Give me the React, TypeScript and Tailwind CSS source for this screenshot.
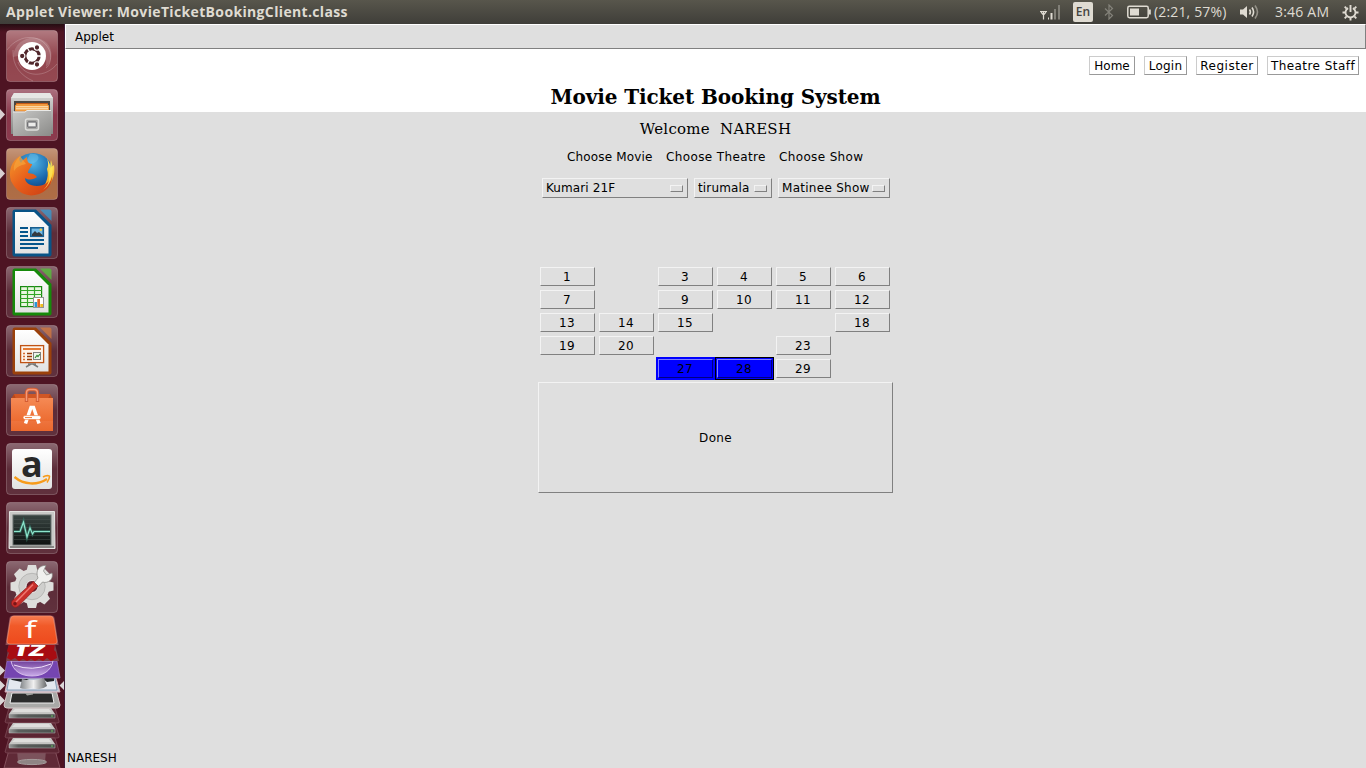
import React from "react";

const SANS = "font-['DejaVu_Sans',sans-serif]";

function Tile({ tint, arrow, children }: { tint: string; arrow?: boolean; children: React.ReactNode }) {
  return (
    <div className="flex h-[59px] w-full items-start">
      <svg width="6" height="52" viewBox="0 0 6 52" className="shrink-0">
        {arrow && <path d="M0 20 L5 25.5 L0 31Z" fill="#d8cfd1" />}
      </svg>
      <svg width="52" height="52" viewBox="0 0 52 52" className="shrink-0 overflow-visible">
        <defs>
          <linearGradient id="gloss" x1="0" y1="0" x2="0" y2="1">
            <stop offset="0" stopColor="#fff" stopOpacity=".36" />
            <stop offset=".5" stopColor="#fff" stopOpacity=".1" />
            <stop offset="1" stopColor="#fff" stopOpacity=".12" />
          </linearGradient>
          <linearGradient id="paper" x1="0" y1="0" x2="0" y2="1">
            <stop offset="0" stopColor="#fff" />
            <stop offset="1" stopColor="#e2e2e2" />
          </linearGradient>
          <linearGradient id="steel" x1="0" y1="0" x2="0" y2="1">
            <stop offset="0" stopColor="#d8d8d6" />
            <stop offset="1" stopColor="#858583" />
          </linearGradient>
          <linearGradient id="drawer" x1="0" y1="0" x2="1" y2="1">
            <stop offset="0" stopColor="#c9c9c7" />
            <stop offset="1" stopColor="#8b8b89" />
          </linearGradient>
          <linearGradient id="bag" x1="0" y1="0" x2="0" y2="1">
            <stop offset="0" stopColor="#f58a55" />
            <stop offset="1" stopColor="#e95f22" />
          </linearGradient>
          <linearGradient id="screen" x1="0" y1="0" x2="0" y2="1">
            <stop offset="0" stopColor="#3a4542" />
            <stop offset="1" stopColor="#0d1211" />
          </linearGradient>
          <radialGradient id="globe" cx=".5" cy=".25" r=".75">
            <stop offset="0" stopColor="#4fb6e8" />
            <stop offset=".6" stopColor="#1a67ab" />
            <stop offset="1" stopColor="#0c3674" />
          </radialGradient>
          <linearGradient id="fox" x1="0" y1="0" x2="1" y2="1">
            <stop offset="0" stopColor="#f59a2c" />
            <stop offset=".45" stopColor="#e8601c" />
            <stop offset="1" stopColor="#c93c12" />
          </linearGradient>
          <linearGradient id="tail" x1="0" y1="0" x2="0" y2="1">
            <stop offset="0" stopColor="#fdf27c" />
            <stop offset=".5" stopColor="#fbc02a" />
            <stop offset="1" stopColor="#ee7a1c" />
          </linearGradient>
        </defs>
        <rect x=".5" y=".5" width="51" height="51" rx="3.5" fill={tint} />
        <rect x=".5" y=".5" width="51" height="51" rx="3.5" fill="url(#gloss)" stroke="#fff" strokeOpacity=".22" />
        {children}
      </svg>
    </div>
  );
}

function Dash() {
  return (
    <Tile tint="#86303a">
      <path d="M7 27 C8 9 29 2 41 13 C48 21 46 32 40 37 C42 22 34 12 26 12 C18 12 12 18 12 26Z" fill="#fff" opacity=".16" />
      <path d="M1 20 C14 2 38 4 44 22 C46 30 43 36 40 38 M51 34 C40 48 18 48 12 32 M7 20 C6 37 16 46 27 51" fill="none" stroke="#fff" strokeOpacity=".25" strokeWidth=".8" />
      <circle cx="26" cy="26" r="14" fill="#fff" />
      <circle cx="26" cy="26" r="7.1" fill="none" stroke="#50262b" strokeWidth="3.2" />
      <path d="M26 26 L36 26 M26 26 L21 34.7 M26 26 L21 17.3" stroke="#fff" strokeWidth="1.3" />
      <g stroke="#fff" strokeWidth="1.1" fill="#50262b">
        <circle cx="16.2" cy="26" r="2.7" />
        <circle cx="31" cy="17.5" r="2.7" />
        <circle cx="31" cy="34.5" r="2.7" />
      </g>
      <circle cx="26" cy="26" r="5.4" fill="#fff" />
    </Tile>
  );
}

function Files() {
  return (
    <Tile tint="#7c2036" arrow>
      <path d="M8 4 H44 L47 9 V45 H5 V9Z" fill="url(#steel)" />
      <path d="M8 4 H44 L47 9 H5Z" fill="#e6e6e4" />
      <path d="M8 12 H44 V24 H8Z" fill="#4a4541" />
      <path d="M10 14 H42 V23 H10Z" fill="#c55a17" />
      <path d="M9 16.5 L11 15 H41 L43 16.5 V22 H9Z" fill="#f19a3e" />
      <path d="M10 17.8 H42 M10 19.8 H42" stroke="#fff1d2" strokeWidth="1" />
      <path d="M7 22.5 H19 L21 21.5 H45 V47 H7Z" fill="url(#drawer)" />
      <path d="M7 23 H19 L21 21.5 H45" fill="none" stroke="#e9e9e7" />
      <rect x="19.5" y="30" width="13" height="11" rx="2" fill="#a5a5a3" stroke="#dededc" strokeWidth="1.5" />
      <rect x="21.8" y="33" width="8.4" height="5" rx=".5" fill="#ececea" stroke="#55555a" />
    </Tile>
  );
}

function Firefox() {
  return (
    <Tile tint="#a35a2e" arrow>
      <circle cx="27" cy="25" r="20" fill="url(#globe)" />
      <path d="M24 6 C31 5 35 9 31 13 C27 17 20 14 18 18" fill="#72c4ec" opacity=".45" />
      <path d="M40 8 C42 13 45 16 44 20 L48 17 C50 30 43 42 31 46 C38 40 44 30 41 21 C43 17 42 12 40 8Z" fill="url(#tail)" />
      <path d="M46 26 C45 34 38 38 31 38 C23 38 19 34 19 30 C24 33 28 31 31 29 C29 26 26 25.5 22 25 C22 21 26 19 26 16 C23 16 21 14 21 9 C18 11 16 13 15 15 C13 13 13 10 14 8 C5 13 2 24 5 33 C10 43 19 49 29 47 C41 45 47 36 46 26Z" fill="url(#fox)" />
      <path d="M14 8 C9 13 7 18 8 23 C12 17 17 17 20 16" fill="#f7a43a" opacity=".7" />
      <path d="M45 12 C49 23 46 36 37 42 C45 35 43 28 43 24Z" fill="#fde454" opacity=".85" />
    </Tile>
  );
}

function Doc({ dark, light, children }: { dark: string; light: string; children: React.ReactNode }) {
  return (
    <Tile tint="#4b1523">
      <path d="M9 2.5 H30 L45.5 18 V47.5 Q45.5 49.5 43.5 49.5 H8.5 Q6.5 49.5 6.5 47.5 V5 Q6.5 2.5 9 2.5Z" fill={dark} />
      <path d="M34 2.5 H43.5 Q45.5 2.5 45.5 4.5 V14 Z" fill={light} opacity=".75" />
      <path d="M9 5 H28 L42.5 19.5 V46.5 H9Z" fill="url(#paper)" />
      {children}
    </Tile>
  );
}

function Writer() {
  return (
    <Doc dark="#095487" light="#359bd2">
      <path d="M14 20.9 H22 M14 25 H22 M14 28.9 H22 M14 33 H38 M14 37 H38 M14 41 H32" stroke="#06568c" strokeWidth="2" />
      <rect x="24.8" y="20.8" width="12.5" height="8.5" fill="#76bce6" stroke="#185f90" strokeWidth="1.6" />
      <path d="M26 29 V27 L29 24 L31 26 L33 25 L36.5 28 V29Z" fill="#343a40" />
      <circle cx="34.8" cy="22.8" r="1.3" fill="#f5ce48" />
    </Doc>
  );
}

function Calc() {
  return (
    <Doc dark="#168a0a" light="#54c638">
      <rect x="14.6" y="20.6" width="21" height="20" fill="#e9f6df" stroke="#198912" strokeWidth="1.2" />
      <path d="M14 24.5 H36 M14 28.5 H36 M14 32.5 H36 M14 36.5 H36 M21.5 20 V41 M28.5 20 V41" stroke="#33a526" strokeWidth="1.2" />
      <rect x="27.5" y="31.5" width="10" height="10" fill="#fff" stroke="#929292" />
      <path d="M28.5 36 H31 V41 H28.5Z" fill="#2995d4" />
      <path d="M31.3 33 H34 V41 H31.3Z" fill="#e36422" />
      <path d="M34.3 38 H37 V41 H34.3Z" fill="#efbd20" />
    </Doc>
  );
}

function Impress() {
  return (
    <Doc dark="#9b410b" light="#d57a3d">
      <rect x="14.6" y="20.6" width="23" height="17" fill="#fdf3ea" stroke="#c05315" strokeWidth="1.3" />
      <path d="M17 24 H35" stroke="#e47a34" strokeWidth="2" />
      <path d="M17 28.5 H20 M17 31.5 H20 M17 34.5 H20" stroke="#d66c31" strokeWidth="1.5" strokeDasharray="2 1" />
      <path d="M21 28.5 H26 M21 31.5 H26 M21 34.5 H26" stroke="#973c0a" strokeWidth="1.5" />
      <rect x="27.5" y="27.5" width="7" height="7" fill="#eef5ec" stroke="#808080" />
      <path d="M29 33 L31 30.5 L32 31.5 L34 29" fill="none" stroke="#358b35" strokeWidth="1.2" />
      <path d="M22 39 H30 M25 39 L20 42 M27 39 L32 42" stroke="#7a7a78" strokeWidth="1.5" />
    </Doc>
  );
}

function SoftwareCenter() {
  return (
    <Tile tint="#4b1523">
      <path d="M5 15 L8 10 H44 L47 15Z" fill="#b9471a" />
      <path d="M8 10 H44 L42 15 H10Z" fill="#d05624" />
      <path d="M5 14 H47 V47 H5Z" fill="url(#bag)" />
      <path d="M5 37 H47 V47 H5Z" fill="#fff" opacity=".06" />
      <path d="M20.5 18 V9 Q20.5 5.5 24 5.5 H28 Q31.5 5.5 31.5 9 V18" fill="none" stroke="#d45c32" strokeWidth="3.4" />
      <path d="M20.5 17 V9 Q20.5 5.5 24 5.5 H28 Q31.5 5.5 31.5 9 V17" fill="none" stroke="#f49a78" strokeWidth="1.4" />
      <path d="M19.5 39.5 L25 23.5 H27.5 L33 39.5" fill="none" stroke="#fff" strokeWidth="3.4" />
      <rect x="17" y="31.6" width="18" height="4" rx="2" fill="#fff" stroke="#ed702e" strokeWidth=".6" />
      <path d="M19 33.6 H26" stroke="#ed7a38" strokeWidth="1" />
    </Tile>
  );
}

function Amazon() {
  return (
    <Tile tint="#4b1523">
      <rect x="6" y="6" width="40" height="40" rx="3" fill="url(#paper)" />
      <text x="25.8" y="34" textAnchor="middle" fontFamily="Open Sans, sans-serif" fontWeight="700" fontSize="36" fill="#292929">a</text>
      <path d="M8.5 34 C18 42 31 42.5 41 36" fill="none" stroke="#f79b1b" strokeWidth="2.3" />
      <path d="M37 34 C40 32 44 32.5 43.5 33.5 C43.5 36 42 38 41 39.5" fill="none" stroke="#f79b1b" strokeWidth="1.6" />
    </Tile>
  );
}

function Monitor() {
  return (
    <Tile tint="#4b1523">
      <path d="M3.5 9.5 H48.5 L49 46.5 H3Z" fill="#c9c9c7" stroke="#e5e5e3" />
      <path d="M4 45 H48" stroke="#858583" strokeWidth="2" />
      <rect x="7" y="13" width="38" height="30" fill="url(#screen)" stroke="#69716e" />
      <path d="M8 17.5 H44 M8 21.5 H44 M8 25.5 H44 M8 33.5 H44 M8 37.5 H44" stroke="#4a5451" opacity=".5" />
      <path d="M8 29.5 H14 L17.5 20 L21 35 L24 26 L26.5 32 L28 29.5 H44" fill="none" stroke="#357a69" strokeWidth="3" opacity=".65" />
      <path d="M8 29.5 H14 L17.5 20 L21 35 L24 26 L26.5 32 L28 29.5 H44" fill="none" stroke="#8de5cc" strokeWidth="1.2" />
    </Tile>
  );
}

function Settings() {
  const teeth = [0, 45, 90, 135, 180, 225, 270, 315];
  return (
    <Tile tint="#4b1523">
      <g fill="#dededc">
        {teeth.map((a) => (
          <path key={a} d="M20.5 10 L22 4 H30 L31.5 10Z" transform={`rotate(${a} 26 25.5)`} />
        ))}
        <circle cx="26" cy="25.5" r="17.5" />
      </g>
      <circle cx="26" cy="25.5" r="13.2" fill="#cfcfcd" stroke="#b8b8b6" />
      <circle cx="26" cy="25.5" r="6" fill="#67202d" stroke="#eee" />
      <path d="M31 27 L27 23 L32 17 C29 10 33 4 40 4.5 L37.5 10 L40.5 14 L46 12 C48 18 42 23 36.5 21Z" fill="#f0f0ee" stroke="#858583" strokeWidth=".7" />
      <path d="M27.5 20.5 L32 25 L12 45.5 C8 48 4 44 6 40Z" fill="#c92f2b" stroke="#8f1b1b" strokeWidth=".7" />
      <path d="M27 23.5 L10 41" stroke="#ef7770" strokeWidth="1.5" />
      <circle cx="9" cy="42.8" r="1.8" fill="#7a1618" />
    </Tile>
  );
}

function FoldedStack() {
  const drives = [708, 723, 738];
  return (
    <svg width="64" height="154" viewBox="0 614 64 154" className="block shrink-0">
      <defs>
        <linearGradient id="metal" x1="0" y1="0" x2="1" y2="0">
          <stop offset="0" stopColor="#83878a" />
          <stop offset=".5" stopColor="#f0f0f0" />
          <stop offset="1" stopColor="#66696b" />
        </linearGradient>
        <linearGradient id="edge" x1="0" y1="0" x2="1" y2="0">
          <stop offset="0" stopColor="#999b9a" />
          <stop offset=".2" stopColor="#5b5f5d" />
          <stop offset="1" stopColor="#4c504e" />
        </linearGradient>
        <linearGradient id="bowl" x1="0" y1="0" x2="0" y2="1">
          <stop offset="0" stopColor="#70409a" />
          <stop offset="1" stopColor="#c9abe9" />
        </linearGradient>
        <linearGradient id="orange" x1="0" y1="0" x2="0" y2="1">
          <stop offset="0" stopColor="#f77b50" />
          <stop offset=".35" stopColor="#f15a29" />
          <stop offset="1" stopColor="#ee4a1d" />
        </linearGradient>
      </defs>
      <path d="M9 750 L4 768 H60 L55 750Z" fill="#602a37" stroke="#84505c" />
      <path d="M17 750 H46 L45 762 H18Z" fill="#86626a" opacity=".75" />
      <ellipse cx="32" cy="762" rx="14.5" ry="2.6" fill="#8f8585" stroke="#a69c9c" />
      {drives.map((y) => (
        <g key={y}>
          <path d={`M9 ${y} L5 ${y + 14} Q6 ${y + 15} 8 ${y + 15} H57 Q60 ${y + 15} 59 ${y + 13} L55 ${y}Z`} fill="#5b2532" stroke="#7d4a57" strokeWidth=".8" />
          <path d={`M13 ${y} H51 L55 ${y + 6} H9Z`} fill="#c6c6c4" />
          <path d={`M15 ${y + 1} H49 L51 ${y + 4} H12Z`} fill="#dededc" />
          <path d={`M9 ${y + 6} H55 V${y + 10} H9Z`} fill="url(#edge)" stroke="#b9bbb9" strokeWidth=".5" />
          <circle cx="52" cy={y + 8} r=".8" fill="#70d160" />
        </g>
      ))}
      <path d="M8 690 L4 705 Q4 708 7 708 H57 Q60 708 60 705 L56 690Z" fill="#a9a9a7" stroke="#d4c8c8" />
      <path d="M12 693 H52 L54 703 H10Z" fill="#2b2b2b" stroke="#eee" />
      <path d="M25 693 L27 695.5 L33 694.5 V693Z" fill="#a2a2a0" />
      <path d="M8 678 L5 692 H60 L56 678Z" fill="#c2cbd8" stroke="#d5b0ba" />
      <path d="M9 679 H55 L57 690 H7Z" fill="#e4e8ef" stroke="#6e8ba9" strokeWidth=".8" />
      <path d="M11 679 H29 L22 682 L12 680Z M42 678 H54 V681 L47 682Z" fill="#24272a" />
      <path d="M22 679 Q32 682 44 678 L47 686 Q41 691 32 688 Q25 690 20 688Z" fill="url(#metal)" />
      <path d="M7 661 L4 678 H60 L57 661Z" fill="#7545b1" stroke="#9b76c2" strokeWidth=".7" />
      <path d="M11 661 H53 C51 671 43 676 32 676 C21 676 13 671 11 661Z" fill="url(#bowl)" stroke="#d5bceb" />
      <path d="M14 665 Q32 672 51 664" fill="none" stroke="#f0e1fa" strokeWidth="1" />
      <path d="M9 644 L6 661 H59 L55 644Z" fill="#7c414b" />
      <path d="M9 644 L7 651 L9 653 L7 658 L11 660 L15 658 L19 661 L23 659 L27 661 L31 659 L35 661 L39 659 L43 661 L47 658 L51 661 L57 658 L56 652 L54 650 L55 644Z" fill="#a80c12" />
      <g transform="translate(14 656) skewX(-14) scale(1.5 .92)">
        <text x="0" y="0" fontFamily="Open Sans, sans-serif" fontWeight="700" fontSize="23" fill="#fff">fz</text>
      </g>
      <path d="M13 615.5 H51 Q54 615.5 54.5 618 L58.5 645 H5.5 L9.5 618 Q10 615.5 13 615.5Z" fill="#8c4c55" />
      <path d="M14 616 H50 Q53 616 53.5 619 L57 641 Q57.5 644 54 644 H10 Q6.5 644 7 641 L10.5 619 Q11 616 14 616Z" fill="url(#orange)" stroke="#fa9876" strokeWidth=".6" />
      <text x="0" y="0" transform="translate(24.5 638) scale(1.5 1.02)" fontFamily="Noto Sans, sans-serif" fontSize="23" fill="#fff">f</text>
      <path d="M0 665.5 L5 670.5 L0 675.5Z M0 680.5 L5 685.5 L0 690.5Z M0 695.5 L5 700.5 L0 705.5Z M64 681 L59.5 685.5 L64 690Z" fill="#dbd6d7" />
    </svg>
  );
}

function Launcher() {
  return (
    <aside className="flex h-[744px] w-[65px] shrink-0 flex-col overflow-hidden border-r border-[#3d1c38] bg-[linear-gradient(#250d12_0px,#4e1423_8px,#4e1423_100%)] pt-[6px]">
      <Dash />
      <Files />
      <Firefox />
      <Writer />
      <Calc />
      <Impress />
      <SoftwareCenter />
      <Amazon />
      <Monitor />
      <div className="h-[53px] shrink-0"><Settings /></div>
      <FoldedStack />
    </aside>
  );
}

function TopPanel() {
  return (
    <header className="flex h-[24px] w-full items-center bg-[linear-gradient(#58564c,#3f3e39)] font-['Open_Sans',sans-serif] text-[14px] text-[#dfdbd2]">
      <div className="ml-[6px] w-[1034px] whitespace-nowrap font-bold leading-6 tracking-[0.35px]">Applet Viewer: MovieTicketBookingClient.class</div>
      <svg width="20" height="18" viewBox="0 0 20 18" className="shrink-0">
        <path d="M0 8.5 H7 M3.5 16.5 V9 M1 9 L3.5 12 L6 9" fill="none" stroke="#dfdbd2" strokeWidth="1.2" />
        <path d="M8 14.5 H9 V16.5 H8Z M10.5 10 H12.5 V16.5 H10.5Z" fill="#dfdbd2" />
        <path d="M14 6 H16 V16.5 H14Z M18 2 H20 V16.5 H18Z" fill="#817f77" />
      </svg>
      <div className="ml-[13px] flex h-5 w-5 shrink-0 items-center justify-center rounded-[2px] bg-[#dfdbd2] text-[12px] font-semibold text-[#45443e]">En</div>
      <svg width="10" height="16" viewBox="0 0 10 16" className="ml-[11px] shrink-0">
        <path d="M1 4.5 L8.5 11.5 L5 15 V1 L8.5 4.5 L1 11.5" fill="none" stroke="#84827a" strokeWidth="1.2" />
      </svg>
      <svg width="24" height="14" viewBox="0 0 24 14" className="ml-[13px] shrink-0">
        <rect x=".8" y="1.3" width="20.4" height="11.4" rx="1.6" fill="none" stroke="#dfdbd2" strokeWidth="1.5" />
        <path d="M3 3.5 H12 V10.5 H3Z M21.8 4.5 H23.8 V9.5 H21.8Z" fill="#dfdbd2" />
      </svg>
      <div className="ml-[3px] w-[74px] shrink-0 whitespace-nowrap leading-6 tracking-[0.15px]">(2:21, 57%)</div>
      <svg width="20" height="16" viewBox="0 0 20 16" className="ml-[12px] shrink-0">
        <path d="M0 5.5 H3 L7 2 V14 L3 10.5 H0Z" fill="#dfdbd2" />
        <path d="M9.5 5.5 Q11.3 8 9.5 10.5 M12 3.5 Q15.2 8 12 12.5" fill="none" stroke="#dfdbd2" strokeWidth="1.6" />
        <path d="M15 1.5 Q20 8 15 14.5" fill="none" stroke="#949188" strokeWidth="1.6" />
      </svg>
      <div className="ml-[15px] w-[55px] shrink-0 whitespace-nowrap leading-6 tracking-[0.2px]">3:46 AM</div>
      <svg width="17" height="17" viewBox="0 0 17 17" className="ml-[12px] shrink-0">
        <path d="M6.1 4.1 A5 5 0 1 0 10.9 4.1" fill="none" stroke="#dfdbd2" strokeWidth="1.8" />
        <path d="M8.5 1 V8 M2.7 2.7 L4.6 4.6 M14.3 2.7 L12.4 4.6 M.5 8.5 H3 M14 8.5 H16.5 M2.7 14.3 L4.6 12.4 M14.3 14.3 L12.4 12.4 M8.5 14 V16.5" stroke="#dfdbd2" strokeWidth="1.9" />
      </svg>
    </header>
  );
}

const bevel = "border border-t-[#f3f3f3] border-l-[#f3f3f3] border-r-[#808080] border-b-[#808080]";

function NavButton({ label, size }: { label: string; size: string }) {
  return (
    <button className={`${size} h-[19px] whitespace-nowrap border border-t-[#cccccc] border-l-[#cccccc] border-r-[#999999] border-b-[#999999] bg-white pt-[1px] text-center leading-[17px]`}>
      {label}
    </button>
  );
}

function Choice({ label, size }: { label: string; size: string }) {
  return (
    <button className={`${size} ${bevel} flex h-[20px] items-center justify-between whitespace-nowrap pl-[3px] pr-[4px] leading-[18px]`}>
      <span className="w-0">{label}</span>
      <span className={`${bevel} h-[7px] w-[13px]`} />
    </button>
  );
}

const TAKEN = [2, 8, 16, 17, 21, 22, 24, 25, 26, 30];
const seatText = "block h-[19px] w-[55px] pr-[1px] pt-[1px] text-center leading-[17px] tracking-[0.4px]";
const selectedBevel = "border border-t-[#8080ff] border-l-[#8080ff] border-r-[#000080] border-b-[#000080]";

function Seat({ n }: { n: number }) {
  if (TAKEN.includes(n)) return <div className="h-[23px] w-[59px]" />;
  if (n === 27)
    return (
      <div className="h-[23px] w-[59px] bg-[#0000ff] p-[2px]">
        <button className={`${selectedBevel} ${seatText}`}>{n}</button>
      </div>
    );
  if (n === 28)
    return (
      <div className="h-[23px] w-[59px] border border-black bg-[#0000ff] p-[1px]">
        <button className={`${selectedBevel} ${seatText}`}>{n}</button>
      </div>
    );
  return (
    <div className="h-[23px] w-[59px] p-[2px]">
      <button className={`${bevel} ${seatText}`}>{n}</button>
    </div>
  );
}

export default function App() {
  const seats = Array.from({ length: 30 }, (_, i) => i + 1);
  return (
    <div className="flex h-[768px] w-[1366px] flex-col overflow-hidden bg-[#dfdfdf]">
      <TopPanel />
      <div className="flex h-[744px]">
        <Launcher />
        <main className={`${SANS} flex h-[744px] w-[1301px] flex-col text-[12px] text-black`}>
          <div className="h-[25px] shrink-0 border border-t-white border-l-white border-r-[#808080] border-b-[#808080] pl-[9px] leading-[24px]">Applet</div>
          <div className="h-[63px] shrink-0 bg-white pt-[7px]">
            <nav className="flex justify-end gap-[9px] pr-[7px]">
              <NavButton label="Home" size="w-[46px]" />
              <NavButton label="Login" size="w-[43px] tracking-[0.2px]" />
              <NavButton label="Register" size="w-[62px] tracking-[0.5px]" />
              <NavButton label="Theatre Staff" size="w-[92px] tracking-[0.45px]" />
            </nav>
            <h1 className="mt-[8px] whitespace-nowrap text-center font-['DejaVu_Serif',serif] text-[20px] font-bold leading-[28px] tracking-[-0.1px]">Movie Ticket Booking System</h1>
          </div>
          <p className="mt-[5px] h-[24px] whitespace-pre text-center font-['DejaVu_Serif',serif] text-[15px] leading-[24px] tracking-[0.27px]">{"Welcome  NARESH"}</p>
          <div className="mt-[7px] flex h-[18px] whitespace-nowrap pl-[502px] leading-[18px]">
            <span className="w-[99px] tracking-[0.17px]">Choose Movie</span>
            <span className="w-[113px] tracking-[0.38px]">Choose Theatre</span>
            <span className="tracking-[0.36px]">Choose Show</span>
          </div>
          <div className="mt-[12px] flex gap-[6px] pl-[477px]">
            <Choice label="Kumari 21F" size="w-[146px] tracking-[0.1px]" />
            <Choice label="tirumala" size="w-[78px] tracking-[0.15px]" />
            <Choice label="Matinee Show" size="w-[112px] tracking-[0.28px]" />
          </div>
          <div className="ml-[473px] mt-[67px] grid w-[354px] grid-cols-6">
            {seats.map((n) => (
              <Seat key={n} n={n} />
            ))}
          </div>
          <button className={`${bevel} ml-[473px] mt-[2px] h-[111px] w-[355px] shrink-0 text-center tracking-[0.3px]`}>Done</button>
          <footer className="mt-auto h-[20px] pl-[2px] leading-[20px]">NARESH</footer>
        </main>
      </div>
    </div>
  );
}
